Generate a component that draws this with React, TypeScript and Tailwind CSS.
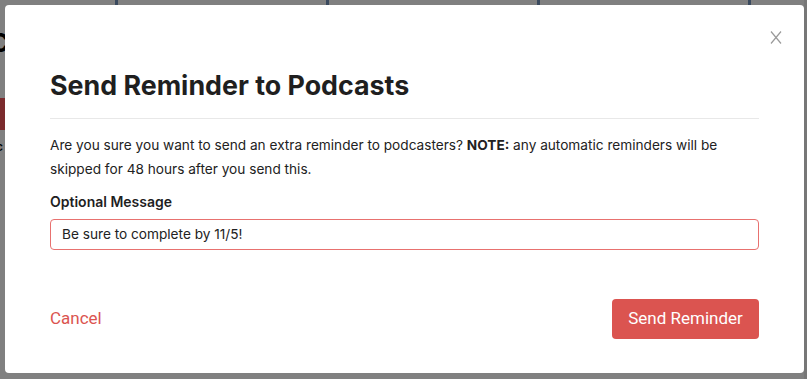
export default function App() {
  return (
    <div className="relative h-[379px] w-[807px] overflow-hidden bg-[#808080] font-['Inter',sans-serif]">
      {/* page behind the overlay */}
      <div className="absolute left-[115px] top-0 flex h-[5px] gap-[208px]">
        <div className="w-[3px] bg-[#3a4a5e]" />
        <div className="w-[3px] bg-[#3a4a5e]" />
        <div className="w-[3px] bg-[#3a4a5e]" />
        <div className="w-[3px] bg-[#3a4a5e]" />
      </div>
      <div className="absolute -left-[10px] top-[30px] text-[26px] font-bold leading-none text-black">C</div>
      <div className="absolute left-0 top-[98px] h-[32px] w-[5px] bg-[#7b2b2d]" />
      <div className="absolute -left-[4px] top-[138px] text-[12px] font-semibold text-black">c</div>
      <div className="absolute right-0 top-0 h-full w-[3px] bg-[#777]" />

      <div className="absolute left-[5px] top-[5px] flex h-[368px] w-[799px] flex-col rounded-[4px] bg-white px-[45px]">
        <button className="absolute right-[22px] top-[26px] p-0 text-[#9a9a9a]">
          <svg width="12" height="13" viewBox="0 0 12 13" fill="none" stroke="currentColor" strokeWidth="1.2">
            <path d="M1 0.5L11 12.5M11 0.5L1 12.5" />
          </svg>
        </button>
        <h2 className="mt-[64px] text-[26.8px] font-bold leading-[32px] text-[#1f1f1f]">
          Send Reminder to Podcasts
        </h2>
        <div className="mt-[17px] h-px w-full bg-[#e8e8e8]" />
        <p className="mt-[14px] text-[13.65px] leading-[24px] text-[#222]">
          Are you sure you want to send an extra reminder to podcasters? <b className="font-bold">NOTE:</b> any
          automatic reminders will be skipped for 48 hours after you send this.
        </p>
        <label className="mt-[11px] text-[14px] font-semibold leading-[20px] text-[#1f1f1f]">Optional Message</label>
        <div className="mt-[7px] flex h-[31px] items-center rounded-[4px] border border-[#e8716f] px-[11px] text-[13.65px] text-[#222]">
          Be sure to complete by 11/5!
        </div>
        <div className="mt-[49px] flex items-center justify-between">
          <button className="font-['Roboto',sans-serif] text-[17px] text-[#db5450]">Cancel</button>
          <button className="flex h-[40px] w-[147px] items-center justify-center rounded-[4px] bg-[#db5450] font-['Roboto',sans-serif] text-[17px] text-white">
            Send Reminder
          </button>
        </div>
      </div>
    </div>
  );
}
